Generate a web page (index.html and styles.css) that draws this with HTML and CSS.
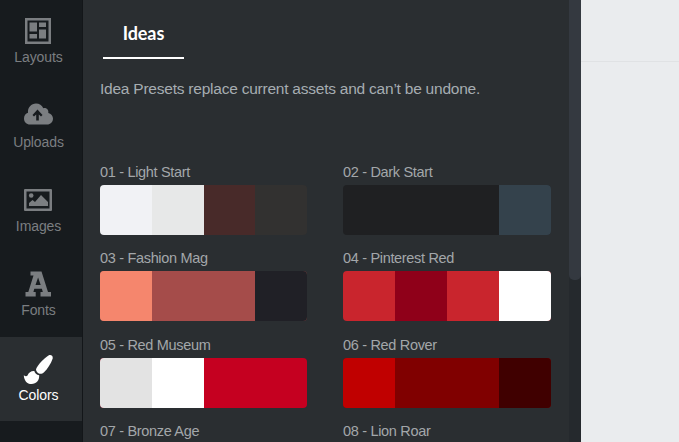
FILE: index.html
```html
<!DOCTYPE html>
<html lang="en">
<head>
    <meta charset="UTF-8">
    <title>Ideas</title>
    <link rel="stylesheet" href="styles.css">
</head>
<body>
    <div class="app">
        <nav class="sidebar">
            <a class="nav-item">
                <svg class="nav-icon" viewBox="0 0 30 30" fill="currentColor">
                    <path fill-rule="evenodd" d="M2 2h26v26H2zM4.500 4.500v21h21v-21z"/>
                    <path d="M6.500 6.500h7.500v9H6.500zM16 6.500h7v4.500h-7zM6.500 18h7.500v4.500H6.500zM16 13.500h7v9h-7z"/>
                </svg>
                <span>Layouts</span>
            </a>
            <a class="nav-item">
                <svg class="nav-icon" viewBox="0 0 30 30" fill="currentColor">
                    <path fill-rule="evenodd" d="M7 23.500C3.500 23.500 1 21 1 17.500c0-2.800 1.700-5 4-5.700C4.500 6.500 8.300 2.500 13 2.500c3.300 0 6 1.900 7.300 4.700 3-.9 5.700 1.500 5 4.700 2.700.6 4.700 2.900 4.700 5.600 0 3.500-2.500 6-6 6zM14.500 8.500l-5 5.500 1.500 1.500 2.200-2v6h2.600v-6l2.200 2 1.500-1.500z"/>
                </svg>
                <span>Uploads</span>
            </a>
            <a class="nav-item">
                <svg class="nav-icon" viewBox="0 0 30 30" fill="currentColor">
                    <path fill-rule="evenodd" d="M2 4h26q1 0 1 1v20q0 1-1 1H2q-1 0-1-1V5q0-1 1-1zM3.500 6.500v17h23v-17z"/>
                    <circle cx="8.200" cy="10.500" r="2.300"/>
                    <path d="M6 21v-3l3.500-3 2.500 2 6-7 7 7v4z"/>
                </svg>
                <span>Images</span>
            </a>
            <a class="nav-item">
                <svg class="nav-icon" viewBox="0 0 30 30" fill="currentColor">
                    <path fill-rule="evenodd" d="M7.500 2.500h11l6.500 20.500h3V27.500H17.500v-4.500h2.300l-.9-3.200h-7.600l-.9 3.200h2.300v4.500H2.500v-4.500h2.800L10.500 6.500h-3zM15.100 8.500L12.500 16h5.200z"/>
                </svg>
                <span>Fonts</span>
            </a>
            <a class="nav-item active">
                <svg class="nav-icon" viewBox="0 0 30 30" fill="currentColor">
                    <path d="M25.500 1.500c2.500-1.500 5 .5 4 3.500-1.500 4.500-5 10-8.500 13.300-1.700 1.600-3.600 1.900-5.200 1.200-1.600-.8-2.700-2.300-2.800-4.200C14.500 11 21 4.300 25.500 1.500z"/>
                    <path d="M11.300 17c.6 2.200 2.200 3.900 4.900 4.300.3 5-2.800 8.700-7.700 8.700C4 30 1 26.500.8 21.200c1.500 1.100 2.600 1.300 3.700.3 1.300-3.200 3.600-4.700 6.800-4.500z"/>
                </svg>
                <span>Colors</span>
            </a>
        </nav>

        <main class="panel">
            <div class="content">
                <div class="tabs">
                    <div class="tab">Ideas</div>
                </div>
                <p class="hint">Idea Presets replace current assets and can’t be undone.</p>

                <div class="presets">
                    <div class="preset">
                        <div class="preset-name">01 - Light Start</div>
                        <div class="swatches light-start"><i></i><i></i><i></i><i></i></div>
                    </div>
                    <div class="preset">
                        <div class="preset-name">02 - Dark Start</div>
                        <div class="swatches dark-start"><i></i><i></i><i></i><i></i></div>
                    </div>
                    <div class="preset">
                        <div class="preset-name">03 - Fashion Mag</div>
                        <div class="swatches fashion-mag"><i></i><i></i><i></i><i></i></div>
                    </div>
                    <div class="preset">
                        <div class="preset-name">04 - Pinterest Red</div>
                        <div class="swatches pinterest-red"><i></i><i></i><i></i><i></i></div>
                    </div>
                    <div class="preset">
                        <div class="preset-name">05 - Red Museum</div>
                        <div class="swatches red-museum"><i></i><i></i><i></i><i></i></div>
                    </div>
                    <div class="preset">
                        <div class="preset-name">06 - Red Rover</div>
                        <div class="swatches red-rover"><i></i><i></i><i></i><i></i></div>
                    </div>
                    <div class="preset">
                        <div class="preset-name">07 - Bronze Age</div>
                    </div>
                    <div class="preset">
                        <div class="preset-name">08 - Lion Roar</div>
                    </div>
                </div>
            </div>
            <div class="scrollbar"><div class="thumb"></div></div>
        </main>

        <section class="canvas">
            <div class="toolbar"></div>
        </section>
    </div>
</body>
</html>
```

FILE: styles.css
```css
:root {
    --sidebar: #171b1e;
    --panel: #2a2e31;
    --muted: #7b7e81;
    --label: #a3a7aa;
    --canvas: #eaecee;
}

* {
    box-sizing: border-box;
}

body {
    margin: 0;
    overflow: hidden;
    font-family: "Liberation Sans", Arial, sans-serif;
    background: var(--canvas);
}

.app {
    display: flex;
    height: 442px;
    overflow: hidden;
}

.sidebar {
    width: 83px;
    flex: none;
    background: var(--sidebar);
    border-right: 1px solid #131619;
}

.nav-item {
    display: flex;
    flex-direction: column;
    align-items: center;
    height: 84.3px;
    padding: 16.400px 6px 0 0;
    color: var(--muted);
    font-size: 14px;
    line-height: 22px;
    letter-spacing: -0.1px;
}

.nav-item.active {
    background: var(--panel);
    color: #fff;
}

.nav-item.active .nav-icon {
    margin-left: -1px;
}

.nav-item span {
    margin-left: 1px;
}

.nav-icon {
    width: 30px;
    height: 30px;
    flex: none;
}

.panel {
    display: flex;
    width: 498px;
    flex: none;
    background: var(--panel);
}

.content {
    flex: 1;
    padding: 0 18px 0 17px;
}

.tabs {
    display: flex;
    height: 59px;
    padding-left: 3px;
}

.tab {
    width: 81px;
    padding-top: 20px;
    border-bottom: 2px solid #fff;
    color: #fff;
    font: bold 18px/26px Lato, sans-serif;
    letter-spacing: -0.1px;
    text-align: center;
}

.hint {
    margin: 20px 0 66px;
    color: #a6adb1;
    font-size: 15.500px;
    line-height: 20px;
    letter-spacing: -0.23px;
    white-space: nowrap;
}

.presets {
    display: grid;
    grid-template-columns: 207px 208px;
    column-gap: 36px;
    row-gap: 16.300px;
}

.preset-name {
    height: 20px;
    color: var(--label);
    font-size: 14.500px;
    line-height: 15px;
    letter-spacing: -0.32px;
    white-space: nowrap;
}

.swatches {
    display: flex;
    height: 50px;
    border-radius: 4px;
    overflow: hidden;
}

.swatches i {
    flex: 1;
}

.light-start i:nth-child(1) { background: #f1f2f5; }
.light-start i:nth-child(2) { background: #e7e8e8; }
.light-start i:nth-child(3) { background: #482a29; }
.light-start i:nth-child(4) { background: #323130; }

.dark-start { background: #1f2022; }
.dark-start i:nth-child(4) { background: #34424c; }

.fashion-mag { background: #a54c4a; }
.fashion-mag i:nth-child(1) { background: #f5866d; }
.fashion-mag i:nth-child(4) { background: #202026; }

.pinterest-red { background: #c9252d; }
.pinterest-red i:nth-child(2) { background: #8f0019; }
.pinterest-red i:nth-child(4) { background: #fff; }

.red-museum { background: #c50020; }
.red-museum i:nth-child(1) { background: #e3e3e3; }
.red-museum i:nth-child(2) { background: #fff; }

.red-rover { background: #800000; }
.red-rover i:nth-child(1) { background: #c00000; }
.red-rover i:nth-child(4) { background: #400000; }

.scrollbar {
    width: 12px;
    background: #25292d;
}

.thumb {
    height: 280px;
    background: #343940;
    border-radius: 0 0 5px 5px;
}

.canvas {
    flex: 1;
    background: var(--canvas);
}

.toolbar {
    height: 62px;
    border-bottom: 1px solid #e0e2e4;
}
```
